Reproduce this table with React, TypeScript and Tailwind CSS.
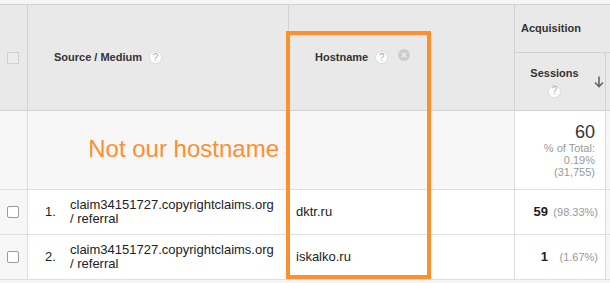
import React from "react";

function Help() {
  return (
    <span className="inline-flex items-center justify-center w-[13px] h-[13px] rounded-full bg-white border border-[#dcdcdc] text-[10px] leading-none text-[#a8a8a8] font-normal">
      ?
    </span>
  );
}

function CloseIcon() {
  return (
    <svg width="12" height="12" viewBox="0 0 12 12">
      <circle cx="6" cy="6" r="6" fill="#cdcdcd" />
      <path d="M3.8 3.8 L8.2 8.2 M8.2 3.8 L3.8 8.2" stroke="#ececec" strokeWidth="1.4" />
    </svg>
  );
}

function DownArrow() {
  return (
    <svg width="10" height="12" viewBox="0 0 10 12">
      <path d="M5 0.5 V10.5 M1 6.5 L5 10.5 L9 6.5" stroke="#666" strokeWidth="1.6" fill="none" />
    </svg>
  );
}

function Check() {
  return <span className="block w-[12px] h-[12px] rounded-[2px] border border-[#9a9a9a] bg-white" />;
}

function Row({ n, host, val, pct }: { n: string; host: string; val: string; pct: string }) {
  return (
    <div className="flex h-[45px] border-b border-[#dedede] bg-white">
      <div className="w-[28px] border-r border-[#dedede] bg-[#f7f7f7] flex items-center pl-[7px]">
        <Check />
      </div>
      <div className="w-[261px] border-r border-[#dedede] flex items-center pl-[17px] text-[13px] text-[#222]">
        <span className="w-[25px]">{n}</span>
        <span className="leading-[14px]">
          claim34151727.copyrightclaims.org
          <br />/ referral
        </span>
      </div>
      <div className="w-[226px] border-r border-[#dedede] flex items-center pl-[7px] text-[13px] text-[#222]">{host}</div>
      <div className="w-[91px] border-r border-[#dedede] flex items-center justify-end pr-[7px]">
        <span className="text-[13px] font-bold text-[#222]">{val}</span>
        <span className="w-[50px] text-right text-[11px] text-[#999]">{pct}</span>
      </div>
      <div className="flex-1 bg-[#f7f7f7]" />
    </div>
  );
}

export default function App() {
  return (
    <div className="relative w-[610px] h-[283px] overflow-hidden bg-[#f5f5f5] font-['Liberation_Sans',Arial,sans-serif]">
      <div className="h-[4px] bg-[#f5f5f5]" />
      {/* header */}
      <div className="flex h-[107px] border-t border-b border-[#d2d2d2] bg-[#e9e9e9]">
        <div className="w-[28px] border-r border-[#d2d2d2] flex items-center pl-[7px]">
          <span className="block w-[12px] h-[12px] border border-[#cfcfcf] bg-[#ececec]" />
        </div>
        <div className="w-[261px] border-r border-[#d2d2d2] flex items-center pl-[26px] gap-[7px]">
          <span className="text-[11px] font-bold text-[#333]">Source / Medium</span>
          <Help />
        </div>
        <div className="w-[226px] border-r border-[#d2d2d2] flex items-center pl-[26px]">
          <span className="text-[11px] font-bold text-[#333]">Hostname</span>
          <span className="ml-[7px] flex"><Help /></span>
          <span className="ml-[10px] -mt-[6px] flex"><CloseIcon /></span>
        </div>
        <div className="flex-1 flex flex-col">
          <div className="h-[48px] border-b border-[#d2d2d2] flex items-center pl-[6px]">
            <span className="text-[11px] font-bold text-[#333]">Acquisition</span>
          </div>
          <div className="flex-1 flex">
            <div className="w-[91px] border-r border-[#d2d2d2] flex items-center">
              <div className="w-[79px] flex flex-col items-center gap-[3px]">
                <span className="text-[11px] font-bold text-[#333]">Sessions</span>
                <Help />
              </div>
              <DownArrow />
            </div>
            <div className="flex-1" />
          </div>
        </div>
      </div>
      {/* totals */}
      <div className="flex h-[79px] border-b border-[#dedede] bg-[#f7f7f7]">
        <div className="w-[28px] border-r border-[#dedede]" />
        <div className="w-[261px] border-r border-[#dedede] pt-[24px] pr-[9px] text-right text-[24px] leading-[28px] text-[#fd8f30]">
          Not our hostname
        </div>
        <div className="w-[226px] border-r border-[#dedede]" />
        <div className="w-[91px] border-r border-[#dedede] bg-white pr-[10px] pt-[11px] text-right">
          <div className="text-[18px] leading-[20px] text-[#333]">60</div>
          <div className="text-[11px] leading-[12px] text-[#999]">
            % of Total:
            <br />0.19%
            <br />(31,755)
          </div>
        </div>
        <div className="flex-1" />
      </div>
      <Row n="1." host="dktr.ru" val="59" pct="(98.33%)" />
      <Row n="2." host="iskalko.ru" val="1" pct="(1.67%)" />
      {/* annotation box */}
      <div className="absolute left-[286px] top-[31px] w-[145px] h-[248px] border-[4px] border-[#fd8f30]" />
    </div>
  );
}
